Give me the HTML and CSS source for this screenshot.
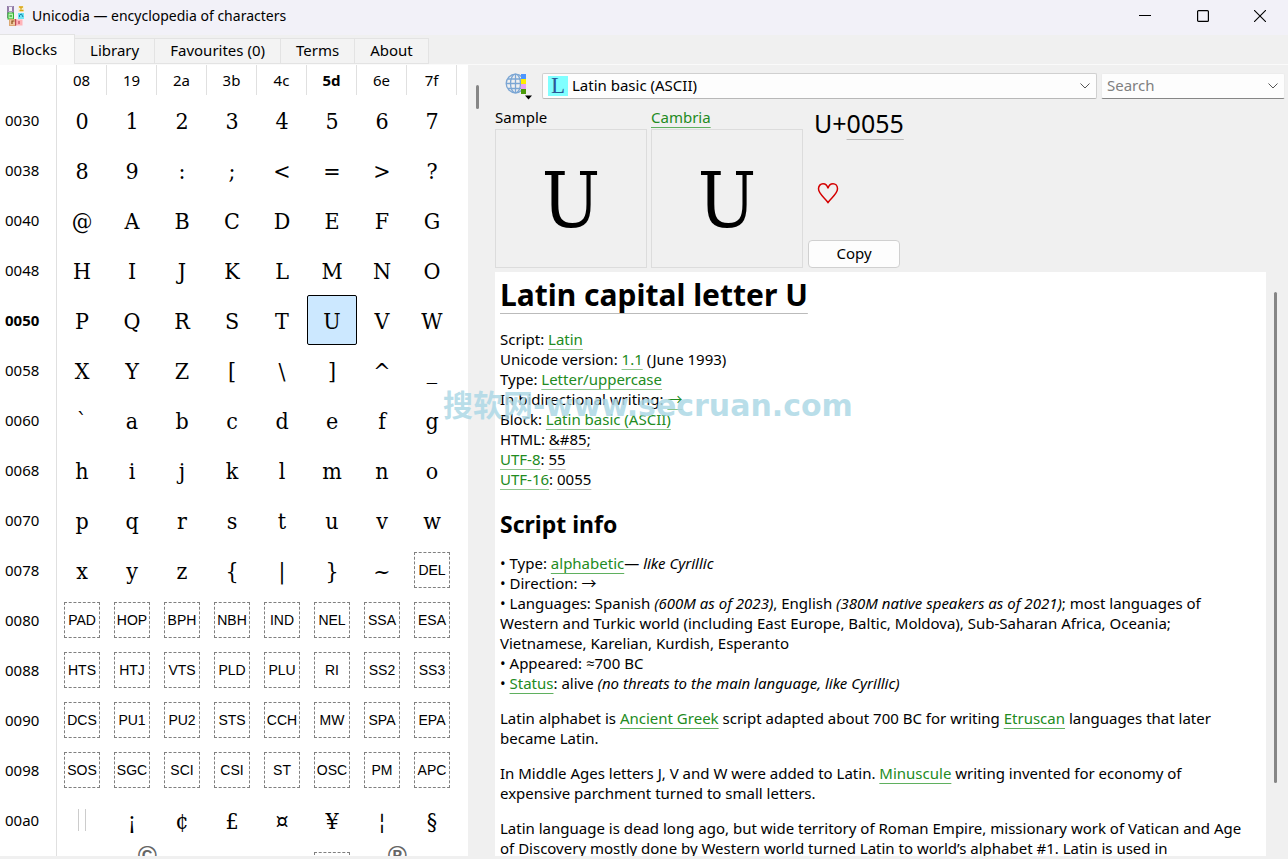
FILE: index.html
```html
<!DOCTYPE html>
<html lang="en">
<head>
<meta charset="utf-8">
<title>Unicodia — encyclopedia of characters</title>
<link rel="stylesheet" href="styles.css">
</head>
<body>
<header class="titlebar">
  <svg class="app-icon" width="18" height="20" viewBox="0 0 18 20" aria-hidden="true">
    <path d="M1 0v12M6 0v12" stroke="#6b4a86" stroke-width="1.4"/>
    <path d="M1 5.500h5M1 .5h5" stroke="#a99abb"/>
    <rect x="1" y="7" width="5.500" height="6" fill="#b6f5b0" stroke="#2fb52f"/>
    <path d="M2.500 10h2.500" stroke="#0a7d0a"/>
    <rect x="11" y="0" width="6" height="6" fill="#f7efd2"/>
    <path d="M12 1h4M14 1v2.500M12.500 4.500h4" stroke="#d9a514" stroke-width="1.300"/>
    <rect x="11" y="7" width="6" height="6" fill="#6fe6f5"/>
    <path d="M12.500 11V9l2-1 1.500 3" fill="none" stroke="#1781a8"/>
    <rect x="2.500" y="13.500" width="6" height="6" fill="#f0c9a0" stroke="#dba873"/>
    <path d="M5 18v-3h2.500" fill="none" stroke="#8a4a12" stroke-width="1.200"/>
    <rect x="9" y="13.500" width="6.500" height="6" fill="#ffb3b8"/>
    <path d="M8.700 13v6.500M12 15v3" stroke="#b5344a"/>
  </svg>
  <span class="window-title">Unicodia — encyclopedia of characters</span>
  <div class="window-buttons">
    <button type="button" aria-label="Minimize"><svg width="12" height="12" viewBox="0 0 12 12"><path d="M0 5.500h12" stroke="#000"/></svg></button>
    <button type="button" aria-label="Maximize"><svg width="12" height="12" viewBox="0 0 12 12"><rect x=".6" y=".6" width="10.800" height="10.800" rx="1" fill="none" stroke="#000" stroke-width="1.200"/></svg></button>
    <button type="button" aria-label="Close"><svg width="12" height="12" viewBox="0 0 12 12"><path d="M0 0l12 12M12 0L0 12" stroke="#000" stroke-width="1.100"/></svg></button>
  </div>
</header>

<nav class="tabs">
  <button type="button" class="tab active">Blocks</button>
  <button type="button" class="tab">Library</button>
  <button type="button" class="tab">Favourites (0)</button>
  <button type="button" class="tab">Terms</button>
  <button type="button" class="tab">About</button>
</nav>

<main class="workspace">
  <section class="chart">
    <table class="glyphs">
      <thead>
        <tr><td></td><th>08</th><th>19</th><th>2a</th><th>3b</th><th>4c</th><th class="current">5d</th><th>6e</th><th>7f</th></tr>
      </thead>
      <tbody>
        <tr><th>0030</th><td>0</td><td>1</td><td>2</td><td>3</td><td>4</td><td>5</td><td>6</td><td>7</td></tr>
        <tr><th>0038</th><td>8</td><td>9</td><td>:</td><td>;</td><td>&lt;</td><td>=</td><td>&gt;</td><td>?</td></tr>
        <tr><th>0040</th><td>@</td><td>A</td><td>B</td><td>C</td><td>D</td><td>E</td><td>F</td><td>G</td></tr>
        <tr><th>0048</th><td>H</td><td>I</td><td>J</td><td>K</td><td>L</td><td>M</td><td>N</td><td>O</td></tr>
        <tr><th class="current">0050</th><td>P</td><td>Q</td><td>R</td><td>S</td><td>T</td><td class="selected">U</td><td>V</td><td>W</td></tr>
        <tr><th>0058</th><td>X</td><td>Y</td><td>Z</td><td>[</td><td>\</td><td>]</td><td>^</td><td>_</td></tr>
        <tr><th>0060</th><td>`</td><td>a</td><td>b</td><td>c</td><td>d</td><td>e</td><td>f</td><td>g</td></tr>
        <tr><th>0068</th><td>h</td><td>i</td><td>j</td><td>k</td><td>l</td><td>m</td><td>n</td><td>o</td></tr>
        <tr><th>0070</th><td>p</td><td>q</td><td>r</td><td>s</td><td>t</td><td>u</td><td>v</td><td>w</td></tr>
        <tr><th>0078</th><td>x</td><td>y</td><td>z</td><td>{</td><td>|</td><td>}</td><td>~</td><td class="control"><span class="ctl">DEL</span></td></tr>
        <tr><th>0080</th><td class="control"><span class="ctl">PAD</span></td><td class="control"><span class="ctl">HOP</span></td><td class="control"><span class="ctl">BPH</span></td><td class="control"><span class="ctl">NBH</span></td><td class="control"><span class="ctl">IND</span></td><td class="control"><span class="ctl">NEL</span></td><td class="control"><span class="ctl">SSA</span></td><td class="control"><span class="ctl">ESA</span></td></tr>
        <tr><th>0088</th><td class="control"><span class="ctl">HTS</span></td><td class="control"><span class="ctl">HTJ</span></td><td class="control"><span class="ctl">VTS</span></td><td class="control"><span class="ctl">PLD</span></td><td class="control"><span class="ctl">PLU</span></td><td class="control"><span class="ctl">RI</span></td><td class="control"><span class="ctl">SS2</span></td><td class="control"><span class="ctl">SS3</span></td></tr>
        <tr><th>0090</th><td class="control"><span class="ctl">DCS</span></td><td class="control"><span class="ctl">PU1</span></td><td class="control"><span class="ctl">PU2</span></td><td class="control"><span class="ctl">STS</span></td><td class="control"><span class="ctl">CCH</span></td><td class="control"><span class="ctl">MW</span></td><td class="control"><span class="ctl">SPA</span></td><td class="control"><span class="ctl">EPA</span></td></tr>
        <tr><th>0098</th><td class="control"><span class="ctl">SOS</span></td><td class="control"><span class="ctl">SGC</span></td><td class="control"><span class="ctl">SCI</span></td><td class="control"><span class="ctl">CSI</span></td><td class="control"><span class="ctl">ST</span></td><td class="control"><span class="ctl">OSC</span></td><td class="control"><span class="ctl">PM</span></td><td class="control"><span class="ctl">APC</span></td></tr>
        <tr><th>00a0</th><td class="control"><span class="space-mark"></span></td><td>¡</td><td>¢</td><td>£</td><td>¤</td><td>¥</td><td>¦</td><td>§</td></tr>
        <tr><th></th><td></td><td><span class="badge">©</span></td><td></td><td></td><td></td><td class="control"><span class="ctl"></span></td><td><span class="badge">®</span></td><td></td></tr>
      </tbody>
    </table>
    <div class="scroll chart-scroll"><div class="thumb"></div></div>
  </section>

  <section class="details">
    <div class="toolbar">
      <button type="button" class="globe" aria-label="Sort order">
        <svg width="28" height="28" viewBox="0 0 28 28">
          <g fill="none" stroke="#7ba6d4" stroke-width="1.300">
            <circle cx="10.500" cy="11.500" r="9.300"/>
            <ellipse cx="10.500" cy="11.500" rx="5" ry="9.300"/>
            <path d="M10.500 2v19M1 11.500h19M3 7h15M3 16.500h15"/>
          </g>
          <path fill="#4d96ff" d="M16 2h5v5h-5z"/><path fill="#ffee00" d="M16 7h5v5h-5z"/>
          <path fill="#e8a2f5" d="M16 12h5v5h-5z"/><path fill="#4a9a08" d="M16 17h5v5h-5z"/>
          <path d="M20 23.500h7l-3.500 4z"/>
        </svg>
      </button>
      <div class="combo block-combo">
        <span class="block-icon">L</span>
        <select aria-label="Block"><option>Latin basic (ASCII)</option></select>
        <svg class="chevron" width="10" height="6" viewBox="0 0 10 6"><path d="M.5 .5L5 5 9.500 .5" fill="none" stroke="#555"/></svg>
      </div>
      <div class="combo search-combo">
        <input type="text" placeholder="Search" aria-label="Search">
        <svg class="chevron" width="10" height="6" viewBox="0 0 10 6"><path d="M.5 .5L5 5 9.500 .5" fill="none" stroke="#555"/></svg>
      </div>
    </div>

    <div class="preview">
      <figure class="sample"><figcaption>Sample</figcaption><div class="sample-box">U</div></figure>
      <figure class="sample"><figcaption><a href="#cambria">Cambria</a></figcaption><div class="sample-box">U</div></figure>
      <div class="actions">
        <div class="code">U+<a class="copyable" href="#code">0055</a></div>
        <button type="button" class="heart" aria-label="Add to favourites">
          <svg width="22" height="22" viewBox="0 0 22 22"><path d="M11 20.500C8 16 1.500 11.800 1.500 6.800 1.500 3.800 3.500 1.700 6 1.700c2.500 0 4.300 1.800 5 4.600.7-2.800 2.500-4.600 5-4.600 2.500 0 4.500 2.100 4.500 5.100C20.500 11.800 14 16 11 20.500z" fill="none" stroke="#d40000" stroke-width="1.500"/></svg>
        </button>
        <button type="button" class="copy">Copy</button>
      </div>
    </div>

    <div class="reader">
      <article class="article">
        <h1><a class="copyable" href="#name">Latin capital letter U</a></h1>
        <p class="facts">Script: <a href="#latin">Latin</a><br>
          Unicode version: <a href="#v11">1.1</a> (June 1993)<br>
          Type: <a href="#lu">Letter/uppercase</a><br>
          In bidirectional writing: <a class="arrow" href="#ltr">→</a><br>
          Block: <a href="#block">Latin basic (ASCII)</a><br>
          HTML: <a class="copyable" href="#html">&amp;#85;</a><br>
          <a href="#utf8">UTF-8</a>: <a class="copyable" href="#u8">55</a><br>
          <a href="#utf16">UTF-16</a>: <a class="copyable" href="#u16">0055</a></p>
        <h2>Script info</h2>
        <ul>
          <li>• Type: <a href="#alphabetic">alphabetic</a>— <i>like Cyrillic</i></li>
          <li>• Direction: <span class="arrow">→</span></li>
          <li>• Languages: Spanish <i>(600M as of 2023)</i>, English <i>(380M native speakers as of 2021)</i>; most languages of Western and Turkic world (including East Europe, Baltic, Moldova), Sub-Saharan Africa, Oceania; Vietnamese, Karelian, Kurdish, Esperanto</li>
          <li>• Appeared: ≈700 BC</li>
          <li>• <a href="#status">Status</a>: alive <i>(no threats to the main language, like Cyrillic)</i></li>
        </ul>
        <p>Latin alphabet is <a href="#greek">Ancient Greek</a> script adapted about 700 BC for writing <a href="#etruscan">Etruscan</a> languages that later became Latin.</p>
        <p>In Middle Ages letters J, V and W were added to Latin. <a href="#minuscule">Minuscule</a> writing invented for economy of expensive parchment turned to small letters.</p>
        <p>Latin language is dead long ago, but wide territory of Roman Empire, missionary work of Vatican and Age of Discovery mostly done by Western world turned Latin to world’s alphabet #1. Latin is used in</p>
      </article>
      <div class="scroll"><div class="thumb long"></div></div>
    </div>
  </section>
</main>
<div class="watermark">搜软网-www.secruan.com</div>
</body>
</html>
```

FILE: styles.css
```css
* { box-sizing: border-box; }

body {
  margin: 0;
  height: 100vh;
  display: flex;
  flex-direction: column;
  overflow: hidden;
  background: #f0f0f0;
  color: #000;
  font: 15px/20px "Noto Sans", "Open Sans", sans-serif;
}

button, input, select { font: inherit; color: inherit; }
button { padding: 0; border: 0; background: none; }

a {
  color: #228b22;
  text-decoration: underline 1px #5fb05f;
  text-decoration-skip-ink: none;
  text-underline-offset: 4px;
}
a.copyable { color: #000; text-decoration-color: #bbb; }

/* Title bar */
.titlebar {
  flex: none;
  height: 35px;
  display: flex;
  align-items: center;
  padding: 0 0 3px 7px;
  background: #f2f1f8;
}
.app-icon { margin-right: 7px; }
.window-title { flex: 1; font-size: 14px; }
.window-buttons { display: flex; }
.window-buttons button { width: 58px; height: 32px; display: grid; place-items: center; }
.window-buttons button:last-child { width: 56px; }

/* Tabs */
.tabs {
  flex: none;
  height: 30px;
  display: flex;
  align-items: flex-end;
  border-bottom: 1px solid #fafafa;
}
.tab {
  height: 26px;
  padding: 0 15px 2px;
  background: #f3f3f3;
  border: 1px solid #e3e3e3;
  border-left: 0;
}
.tab.active {
  height: 30px;
  padding: 0 17px 2px 12px;
  background: #fafafa;
  border-bottom: 0;
}

/* Character chart */
.workspace { flex: 1; min-height: 0; display: flex; margin-bottom: 3px; overflow: hidden; }
.chart { flex: none; display: flex; background: #fff; overflow: hidden; }
.glyphs {
  width: 457px;
  flex: none;
  align-self: flex-start;
  margin-right: 11px;
  table-layout: fixed;
  border-collapse: separate;
  border-spacing: 0;
}
.glyphs td, .glyphs th { padding: 0; font-weight: normal; text-align: center; }
.glyphs thead td { width: 57px; height: 30px; border-right: 1px solid #e0e0e0; }
.glyphs thead th { width: 50px; border-right: 1px solid #e0e0e0; }
.glyphs tbody th { height: 50px; padding-left: 5px; text-align: left; border-right: 1px solid #e0e0e0; }
.glyphs tbody td {
  position: relative;
  height: 50px;
  padding-top: 1px;
  font: 23px/28px "DejaVu Serif Condensed", "Liberation Serif", serif;
}
.glyphs tbody td.control { padding: 0; }
.glyphs th.current { font-weight: bold; }
.glyphs td.selected { background: #cce8ff; border: 1px solid #000; border-radius: 2px; }
.ctl {
  display: block;
  width: 36px;
  height: 36px;
  margin: 0 auto;
  border: 1px dashed #808080;
  font: 14px/34px "Liberation Sans", sans-serif;
  white-space: nowrap;
}
.space-mark {
  display: block;
  width: 8px;
  height: 22px;
  margin: 0 auto;
  border: solid #ccc;
  border-width: 0 1px;
}
.badge {
  position: absolute;
  top: -3px;
  right: 0;
  color: #666;
  font: bold 26px/26px "Liberation Sans", sans-serif;
}

.scroll { flex: none; width: 22px; padding: 20px 0 0 8px; background: #f0f0f0; }
.chart-scroll { width: 27px; }
.thumb { width: 3px; height: 24px; border-radius: 2px; background: #868686; }
.thumb.long { height: 87%; }

/* Details */
.details { flex: 1; min-width: 0; display: flex; flex-direction: column; }
.toolbar { display: flex; align-items: center; gap: 4px; padding: 7px 3px 0 10px; }
.globe { width: 33px; height: 28px; text-align: left; }
.globe svg { display: block; }
.combo {
  min-width: 0;
  height: 26px;
  display: flex;
  align-items: center;
  padding: 0 6px 0 5px;
  background: #fdfdfd;
  border: 1px solid #d0d0d0;
  border-bottom-color: #b8b8b8;
  border-radius: 2px;
}
.combo select, .combo input {
  flex: 1;
  min-width: 0;
  height: 24px;
  padding: 0 0 2px;
  border: 0;
  outline: 0;
  background: none;
  appearance: none;
}
.combo input::placeholder { color: #808080; opacity: 1; }
.block-combo { flex: 1; }
.search-combo { flex: 0 0 184px; border-color: #ececec; border-bottom-color: #868686; }
.chevron { flex: none; }
.block-icon {
  width: 20px;
  height: 20px;
  margin-right: 4px;
  background: #80ffff;
  color: #2b5797;
  font: 23px/20px "Liberation Serif", serif;
  text-align: center;
}

.preview { display: flex; gap: 4px; padding: 7px 0 4px; }
.sample { margin: 0; width: 152px; }
.sample figcaption { height: 22px; }
.sample-box {
  height: 139px;
  border: 1px solid #dcdcdc;
  font: 77px/142px "DejaVu Serif Condensed", "Liberation Serif", serif;
  text-align: center;
}
.actions { display: flex; flex-direction: column; align-items: flex-start; padding: 0 1px; }
.code { padding: 1px 0 8px 6px; font-size: 25px; line-height: 30px; }
.code a { text-underline-offset: 6px; }
.heart { margin: auto 0 auto 9px; }
.heart svg { display: block; }
.copy {
  width: 92px;
  height: 28px;
  padding-bottom: 2px;
  background: #fdfdfd;
  border: 1px solid #d0d0d0;
  border-radius: 4px;
}

/* Article */
.reader { flex: 1; min-height: 0; display: flex; }
.article { flex: 1; padding: 3px 13px 0 5px; background: #fff; overflow: hidden; }
.article h1 { margin: 0 0 14px; font-size: 30px; line-height: 40px; }
.article h1 a { text-underline-offset: 7px; }
.article p { margin: 0 0 15px; }
.article .facts { margin-bottom: 20px; }
.facts a:not(.copyable) { text-decoration-color: #8fc58f; }
.article h2 { margin: 0 0 14px; font-size: 23px; line-height: 30px; }
.article ul { margin: 0 0 15px; padding: 0; list-style: none; }
.arrow { font-family: "Noto Sans CJK SC", sans-serif; line-height: 1; }

.watermark {
  position: absolute;
  left: 443px;
  top: 386px;
  color: rgba(173, 216, 230, .85);
  font: bold 30px/40px "DejaVu Sans", "Noto Sans CJK SC", sans-serif;
  pointer-events: none;
}
```
